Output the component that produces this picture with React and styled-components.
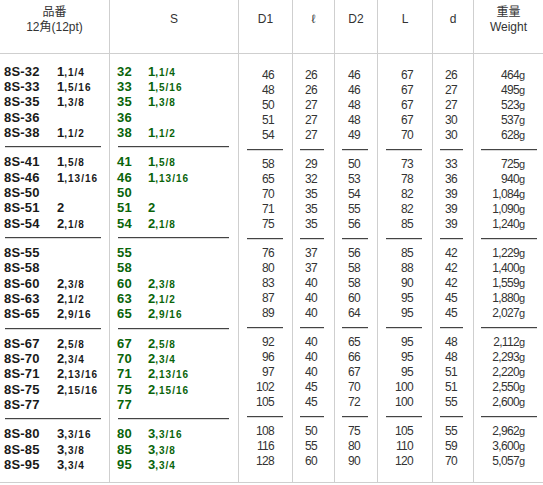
import React from 'react';
import styled, { createGlobalStyle } from 'styled-components';

const GlobalStyle = createGlobalStyle`
  html, body {
    margin: 0;
    padding: 0;
    background: #fff;
    overflow: hidden;
  }
  body {
    font-family: "Liberation Sans", "Noto Sans CJK JP", sans-serif;
  }
`;

// [code, inch, S, [D1, l, D2, L, d, weight]] -- inch: [whole, fraction] or null
const groups = [
  [
    ['8S-32', ['1', ',1/4'], 32, [46, 26, 46, 67, 26, '464']],
    ['8S-33', ['1', ',5/16'], 33, [48, 26, 46, 67, 27, '495']],
    ['8S-35', ['1', ',3/8'], 35, [50, 27, 48, 67, 27, '523']],
    ['8S-36', null, 36, [51, 27, 48, 67, 30, '537']],
    ['8S-38', ['1', ',1/2'], 38, [54, 27, 49, 70, 30, '628']],
  ],
  [
    ['8S-41', ['1', ',5/8'], 41, [58, 29, 50, 73, 33, '725']],
    ['8S-46', ['1', ',13/16'], 46, [65, 32, 53, 78, 36, '940']],
    ['8S-50', null, 50, [70, 35, 54, 82, 39, '1,084']],
    ['8S-51', ['2', ''], 51, [71, 35, 55, 82, 39, '1,090']],
    ['8S-54', ['2', ',1/8'], 54, [75, 35, 56, 85, 39, '1,240']],
  ],
  [
    ['8S-55', null, 55, [76, 37, 56, 85, 42, '1,229']],
    ['8S-58', null, 58, [80, 37, 58, 88, 42, '1,400']],
    ['8S-60', ['2', ',3/8'], 60, [83, 40, 58, 90, 42, '1,559']],
    ['8S-63', ['2', ',1/2'], 63, [87, 40, 60, 95, 45, '1,880']],
    ['8S-65', ['2', ',9/16'], 65, [89, 40, 64, 95, 45, '2,027']],
  ],
  [
    ['8S-67', ['2', ',5/8'], 67, [92, 40, 65, 95, 48, '2,112']],
    ['8S-70', ['2', ',3/4'], 70, [96, 40, 66, 95, 48, '2,293']],
    ['8S-71', ['2', ',13/16'], 71, [97, 40, 67, 95, 51, '2,220']],
    ['8S-75', ['2', ',15/16'], 75, [102, 45, 70, 100, 51, '2,550']],
    ['8S-77', null, 77, [105, 45, 72, 100, 55, '2,600']],
  ],
  [
    ['8S-80', ['3', ',3/16'], 80, [108, 50, 75, 105, 55, '2,962']],
    ['8S-85', ['3', ',3/8'], 85, [116, 55, 80, 110, 59, '3,600']],
    ['8S-95', ['3', ',3/4'], 95, [128, 60, 90, 120, 70, '5,057']],
  ],
];

// padding of each number column: left, right, extra right for the figures
const numCols = [
  { pl: 8, pr: 9, np: 9 },
  { pl: 7, pr: 10, np: 7 },
  { pl: 7, pr: 9, np: 8 },
  { pl: 8, pr: 10, np: 9 },
  { pl: 7, pr: 10, np: 6 },
  { pl: 7, pr: 6, np: 12 },
];

const Inch = ({ inch }) => {
  if (!inch) return null;
  return (
    <span>
      {inch[0]}
      <Frac>{inch[1]}</Frac>
    </span>
  );
};

const App = () => {
  return (
    <>
      <GlobalStyle />
      <Table>
        <HeadCell $first>
          <div>品番</div>
          <div>12角(12pt)</div>
        </HeadCell>
        <HeadCell>S</HeadCell>
        <HeadCell>D1</HeadCell>
        <HeadCell>ℓ</HeadCell>
        <HeadCell>D2</HeadCell>
        <HeadCell>L</HeadCell>
        <HeadCell>d</HeadCell>
        <HeadCell>
          <div>重量</div>
          <div>Weight</div>
        </HeadCell>

        <BodyCell $first $pl={5} $pr={8}>
          {groups.map((g, gi) => (
            <React.Fragment key={gi}>
              {gi > 0 && <Rule />}
              {g.map((row) => (
                <SizeLine key={row[0]}>
                  <Code $w={53}>{row[0]}</Code>
                  <Inch inch={row[1]} />
                </SizeLine>
              ))}
            </React.Fragment>
          ))}
        </BodyCell>

        <BodyCell $pl={8} $pr={9}>
          {groups.map((g, gi) => (
            <React.Fragment key={gi}>
              {gi > 0 && <Rule />}
              {g.map((row) => (
                <SizeLine key={row[0]} $green>
                  <Code $w={31}>{row[2]}</Code>
                  <Inch inch={row[1]} />
                </SizeLine>
              ))}
            </React.Fragment>
          ))}
        </BodyCell>

        {numCols.map((c, ci) => (
          <BodyCell key={ci} $pl={c.pl} $pr={c.pr}>
            {groups.map((g, gi) => (
              <React.Fragment key={gi}>
                {gi > 0 && <Rule />}
                {g.map((row) => (
                  <NumLine key={row[0]} $np={c.np}>
                    {row[3][ci]}
                    {ci === 5 && <Unit>g</Unit>}
                  </NumLine>
                ))}
              </React.Fragment>
            ))}
          </BodyCell>
        ))}
      </Table>
    </>
  );
};

const Table = styled.div`
  display: grid;
  grid-template-columns: 109px 129px 54px 42px 43px 55px 41px 70px;
  width: 543px;
`;

const HeadCell = styled.div`
  box-sizing: border-box;
  height: 54px;
  padding-bottom: 14px;
  display: flex;
  flex-direction: column;
  justify-content: center;
  align-items: center;
  border-left: ${(p) => (p.$first ? 'none' : '1px solid #cfcfcf')};
  border-bottom: 1px solid #cfcfcf;
  font-size: 12px;
  line-height: 15px;
  color: #333;
  text-align: center;
`;

const BodyCell = styled.div`
  box-sizing: border-box;
  height: 429px;
  padding: 0 ${(p) => p.$pr}px 0 ${(p) => p.$pl}px;
  display: flex;
  flex-direction: column;
  justify-content: center;
  border-left: ${(p) => (p.$first ? 'none' : '1px solid #cfcfcf')};
  border-bottom: 1px solid #cfcfcf;
`;

const SizeLine = styled.div`
  display: flex;
  align-items: baseline;
  height: 15.33px;
  line-height: 15.33px;
  margin-left: -1px;
  font-size: 13px;
  font-weight: 700;
  white-space: nowrap;
  color: ${(p) => (p.$green ? '#0a640a' : '#1a1a1a')};
`;

const Code = styled.span`
  display: inline-block;
  width: ${(p) => p.$w}px;
  flex: none;
  letter-spacing: 0.2px;
`;

const Frac = styled.span`
  font-size: 10px;
  letter-spacing: 1px;
`;

const NumLine = styled.div`
  height: 15px;
  line-height: 15px;
  padding-right: ${(p) => p.$np}px;
  text-align: right;
  font-size: 12px;
  letter-spacing: -0.7px;
  color: #333;
  white-space: nowrap;
`;

const Unit = styled.span`
  font-size: 11px;
  letter-spacing: 0;
`;

const Rule = styled.hr`
  height: 0;
  margin: 6px 0;
  border: 0;
  border-top: 1px solid #444;
  border-bottom: 1px solid #d8d8d8;
  flex: none;
`;

export default App;
